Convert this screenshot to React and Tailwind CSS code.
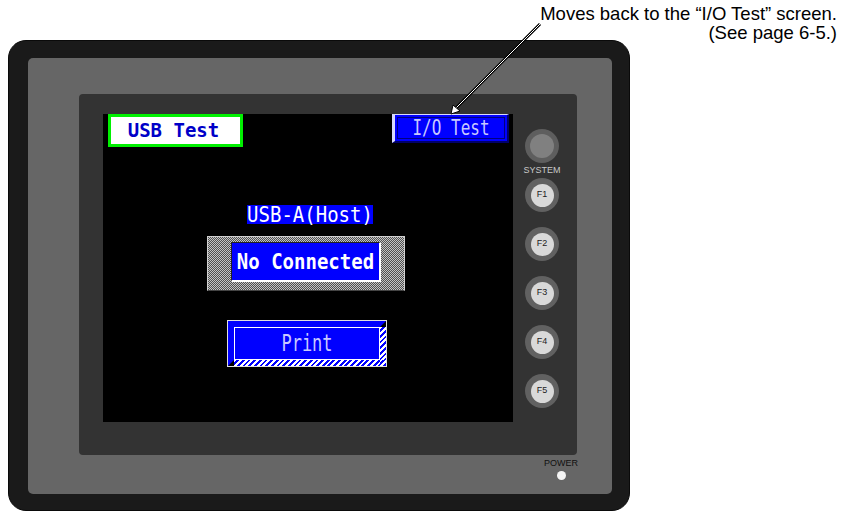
const FKEYS = ['F1', 'F2', 'F3', 'F4', 'F5'];

function FKey({ label }) {
  return (
    <div className="w-[34px] h-[34px] rounded-full bg-[#616161] flex items-center justify-center">
      <div className="w-[23px] h-[23px] rounded-full bg-[#d9d9d9] flex items-center justify-center text-[9px] text-[#222] font-['Liberation_Sans',Arial,sans-serif]">
        {label}
      </div>
    </div>
  );
}

export default function App() {
  return (
    <div className="relative w-[846px] h-[512px] bg-white overflow-hidden">
      {/* Callout text */}
      <div className="h-[40px] pt-[4px] pr-[9px] text-right text-[18.5px] leading-[19px] text-black font-['Liberation_Sans',Arial,sans-serif]">
        <p>Moves back to the “I/O Test” screen.</p>
        <p>(See page 6-5.)</p>
      </div>

      {/* Outer bezel */}
      <div className="ml-[8px] w-[622px] h-[471px] rounded-[18px] bg-[#1a1a1a] border border-[#0a0a0a] pt-[17px] pl-[19px]">
        <div className="w-[584px] h-[436px] rounded-[5px] bg-[#666666] pt-[36px] pl-[51px]">
          <div className="w-[498px] h-[361px] rounded-[4px] bg-[#333333] flex pt-[20px] pl-[24px]">
            {/* Screen */}
            <div className="w-[410px] h-[308px] bg-black flex flex-col font-['DejaVu_Sans_Mono',monospace]">
              <div className="flex justify-between pl-[5px] pr-[4px]">
                <div className="w-[135px] h-[33px] border-[3px] border-[#00f000] bg-white flex items-center justify-center text-[19px] font-bold text-[#0000c8] pr-[4px]">
                  <span className="inline-block scale-y-[1.05]">USB Test</span>
                </div>
                <div className="w-[117px] h-[29px] bg-[#0000ff] border-l-[3px] border-t border-l-[#d8d8ff] border-t-[#d8d8ff] border-r-2 border-b-2 border-r-[#00006a] border-b-[#00006a] p-[2px]">
                  <div className="h-full border border-[#000080] flex items-center justify-center text-[16px] text-[#c8c8ff]">
                    <span className="inline-block scale-y-[1.35]">I/O Test</span>
                  </div>
                </div>
              </div>

              <div className="ml-[144px] mt-[58px] h-[19px] w-[126px] bg-[#0000ff] text-white text-[19px] leading-[19px] text-center">
                <span className="inline-block scale-y-[1.08]">USB-A(Host)</span>
              </div>

              <div className="ml-[104px] mt-[12px] w-[198px] h-[55px] border border-[#d0d0d0] border-b-[#444] bg-[repeating-conic-gradient(#c4c4c4_0_25%,#505050_0_50%)] bg-[length:2px_2px] pl-[23px] pt-[5px]">
                <div className="w-[150px] h-[40px] bg-[#0000ff] border-t border-l border-t-[#222] border-l-[#222] border-r-2 border-b-2 border-white flex items-center justify-center text-white text-[19px] font-bold">
                  <span className="inline-block scale-y-[1.08]">No Connected</span>
                </div>
              </div>

              <div className="ml-[124px] mt-[29px] w-[160px] h-[47px] border border-[#e0e0e0]">
                <div className="w-full h-full border-[6px] border-t-[#0000ff] border-l-[#0000ff] border-r-transparent border-b-transparent bg-[repeating-linear-gradient(135deg,#ffffff_0_2px,#0000ff_2px_4px)]">
                  <div className="w-full h-full bg-[#0000ff] border border-white flex items-center justify-center text-[17px] text-[#c8c8ff]">
                    <span className="inline-block scale-y-[1.32]">Print</span>
                  </div>
                </div>
              </div>
            </div>

            {/* Function keys */}
            <div className="w-[58px] flex flex-col items-center pt-[15px] font-['Liberation_Sans',Arial,sans-serif]">
              <div className="w-[34px] h-[34px] rounded-full bg-[#5e5e5e] flex items-center justify-center">
                <div className="w-[24px] h-[24px] rounded-full bg-[#808080]" />
              </div>
              <div className="h-[15px] leading-[15px] text-[9px] text-[#c8c8c8]">SYSTEM</div>
              <div className="flex flex-col gap-[15px]">
                {FKEYS.map((k) => (
                  <FKey key={k} label={k} />
                ))}
              </div>
            </div>
          </div>

          {/* Power */}
          <div className="w-[498px] flex justify-end">
            <div className="w-[32px] flex flex-col items-center mt-[3px] font-['Liberation_Sans',Arial,sans-serif]">
              <div className="text-[9px] leading-[10px] text-[#111]">POWER</div>
              <div className="mt-[3px] w-[9px] h-[9px] rounded-full bg-[#f4f4f4]" />
            </div>
          </div>
        </div>
      </div>

      {/* Callout leader */}
      <svg className="absolute left-0 top-0 pointer-events-none" width="846" height="512">
        <line x1="540" y1="24" x2="455" y2="109" stroke="#000" strokeWidth="3" />
        <line x1="540" y1="24" x2="455" y2="109" stroke="#fff" strokeWidth="1" />
        <polygon points="451,114 453,105 460,111" fill="#fff" stroke="#000" strokeWidth="1" />
      </svg>
    </div>
  );
}
